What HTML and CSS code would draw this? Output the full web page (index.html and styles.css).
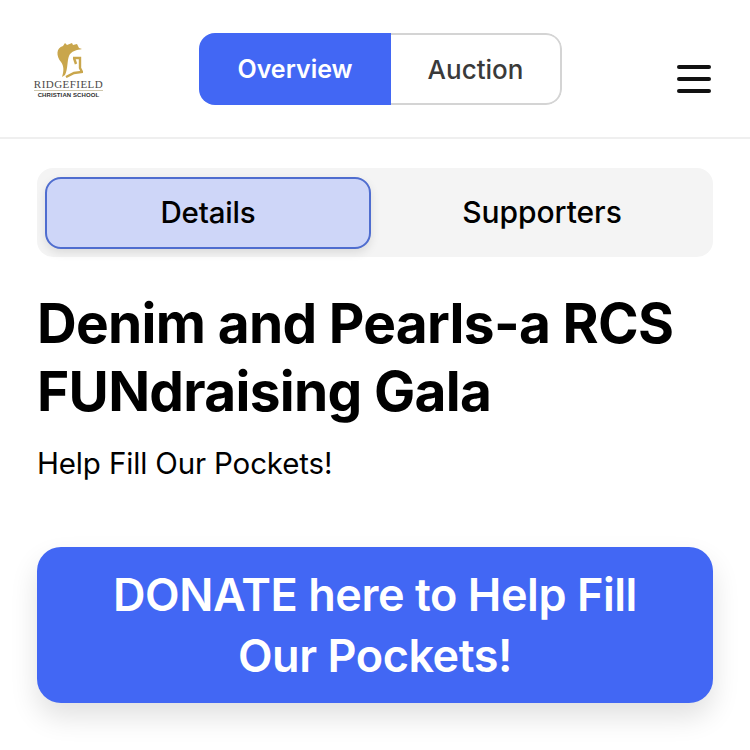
FILE: index.html
```html
<!DOCTYPE html>
<html lang="en">
<head>
<meta charset="utf-8">
<title>Denim and Pearls</title>
<link rel="stylesheet" href="styles.css">
</head>
<body>
<header class="header">
  <div class="logo">
    <svg class="crest" width="28" height="36" viewBox="0 0 28 36">
      <path class="gold" d="M7 35C9 29 9 24 6 20C1 14 1 6 8 4L10 1L12 3L17 1L18 3L22 2L24 6L27 7C22 8 16 9 14 14C12 19 13 27 10 33Z"/>
      <path class="gold-line" d="M18 16H25V26L27 30L19 31L11 35"/>
      <path class="gold-line" d="M19 16L21 22"/>
    </svg>
    <div class="logo-name">RIDGEFIELD</div>
    <div class="logo-sub">CHRISTIAN SCHOOL</div>
  </div>
  <nav class="switch">
    <a class="switch-item switch-on">Overview</a>
    <a class="switch-item switch-off">Auction</a>
  </nav>
  <button class="burger" aria-label="Menu"><span></span><span></span><span></span></button>
</header>
<main class="content">
  <div class="tabs">
    <div class="tab tab-active">Details</div>
    <div class="tab tab-plain">Supporters</div>
  </div>
  <h1 class="title">Denim and Pearls-a RCS FUNdraising Gala</h1>
  <p class="subtitle">Help Fill Our Pockets!</p>
  <a class="donate">DONATE here to Help Fill Our Pockets!</a>
</main>
</body>
</html>
```
FILE: styles.css
```css
* { box-sizing: border-box; }
html, body { margin: 0; height: 750px; overflow: hidden; background: #fff; }
body { font-family: Inter, "Liberation Sans", sans-serif; color: #000; }

.header {
  height: 139px;
  border-bottom: 2px solid #efefef;
  display: grid;
  grid-template-columns: 199px 363px 1fr;
  padding-top: 1px;
  align-items: center;
}
.logo { display: flex; flex-direction: column; align-items: center; width: 137px; padding-top: 2px; }
.crest { display: block; }
.gold { fill: #c9a64c; }
.gold-line { fill: none; stroke: #c9a64c; stroke-width: 2.4; }
.logo-name { font-family: "Liberation Serif", serif; font-size: 11px; line-height: 12px; letter-spacing: .45px; color: #4c4a48; border-bottom: 1px solid #cfc7ad; }
.logo-sub { font-family: "Liberation Sans", sans-serif; font-weight: 700; font-size: 6px; line-height: 8px; color: #2e2e2e; letter-spacing: .1px; }

.switch { display: flex; height: 72px; border-radius: 16px; overflow: hidden; }
.switch-item { display: flex; align-items: center; justify-content: center; font-size: 26px; font-weight: 500; }
.switch-on { width: 192px; background: #4267f4; color: #fff; font-size: 25px; font-weight: 600; }
.switch-off { flex: 1; border: 2px solid #d4d4d4; border-left: 0; border-radius: 0 16px 16px 0; color: #3a3a3a; }

.burger { justify-self: end; margin-right: 39px; width: 34px; padding: 0; border: 0; background: none; display: flex; flex-direction: column; gap: 8px; margin-top: 19px; }
.burger span { display: block; height: 4px; border-radius: 2px; background: #111; }

.content { padding: 29px 37px 0; }
.tabs { display: grid; grid-template-columns: 326px 1fr; height: 89px; padding: 9px 0 8px 8px; background: #f4f4f4; border-radius: 16px; }
.tab { display: flex; align-items: center; justify-content: center; padding-bottom: 2px; font-size: 29.5px; font-weight: 500; letter-spacing: -.2px; }
.tab-plain { font-size: 30px; letter-spacing: -.05px; }
.tab-active { background: #ced6f8; border: 2px solid #4f6dcf; border-radius: 16px; box-shadow: 0 4px 10px rgba(0,0,0,.1); }

.title { margin: 32px 0 0; font-size: 55px; line-height: 68px; font-weight: 700; letter-spacing: -.7px; }
.subtitle { margin: 18px 0 0; font-size: 29.5px; line-height: 40px; letter-spacing: -.15px; }

.donate {
  display: flex; align-items: center; justify-content: center;
  height: 156px; margin-top: 64px; padding: 0 60px;
  background: #4267f4; color: #fff; border-radius: 24px;
  font-size: 45px; line-height: 61px; font-weight: 600; text-align: center; letter-spacing: -.45px;
  box-shadow: 0 14px 28px rgba(0,0,0,.12);
}
```
